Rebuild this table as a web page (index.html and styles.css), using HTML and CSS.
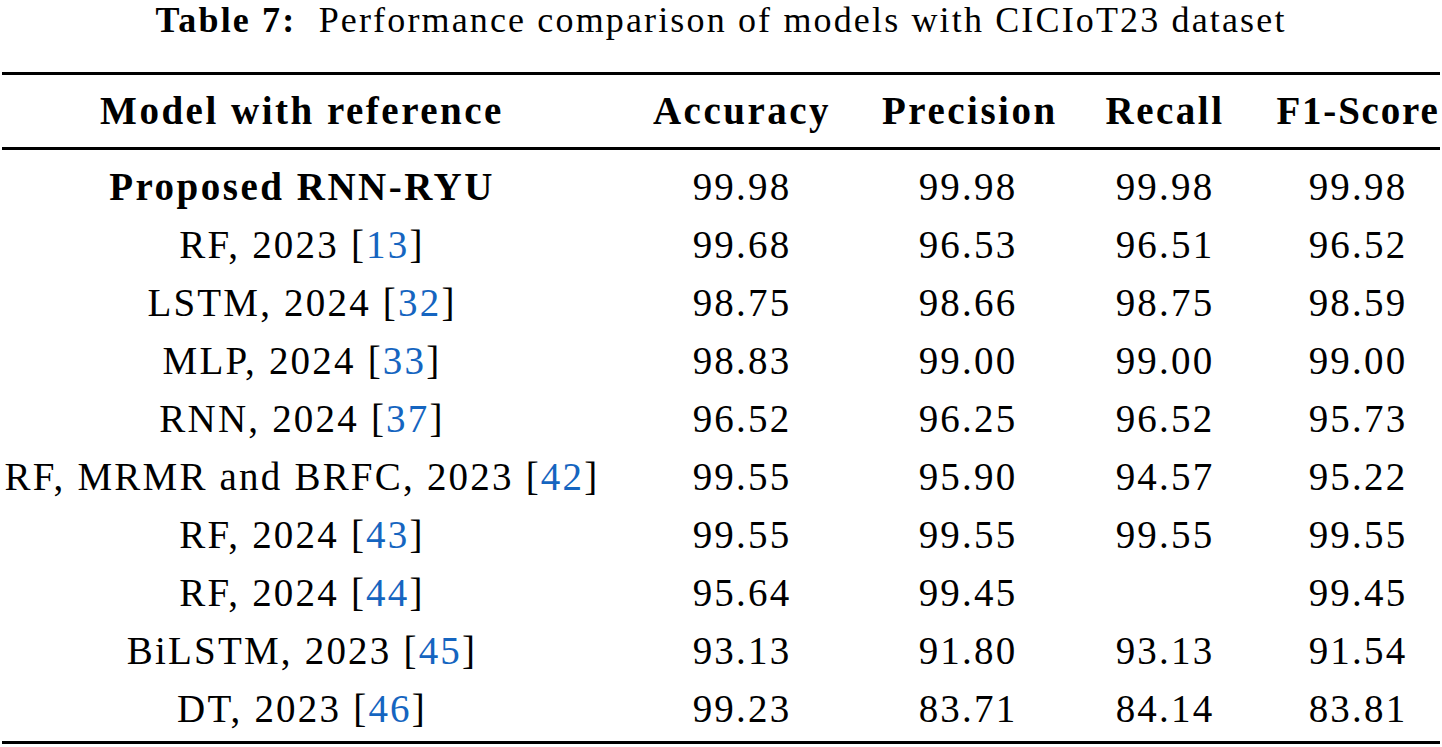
FILE: index.html
```html
<!DOCTYPE html>
<html>
<head>
<meta charset="utf-8">
<link rel="stylesheet" href="styles.css">
</head>
<body>
<div class="page">
  <div class="caption"><b>Table 7:</b>&nbsp; Performance comparison of models with CICIoT23 dataset</div>
  <table class="results">
    <colgroup>
      <col class="c1"><col class="c2"><col class="c3"><col class="c4"><col class="c5">
    </colgroup>
    <thead>
      <tr>
        <th>Model with reference</th>
        <th>Accuracy</th>
        <th>Precision</th>
        <th>Recall</th>
        <th class="tight">F1-Score</th>
      </tr>
    </thead>
    <tbody>
      <tr class="first"><td class="bold">Proposed RNN-RYU</td><td>99.98</td><td>99.98</td><td>99.98</td><td>99.98</td></tr>
      <tr><td>RF, 2023 [<span class="ref">13</span>]</td><td>99.68</td><td>96.53</td><td>96.51</td><td>96.52</td></tr>
      <tr><td>LSTM, 2024 [<span class="ref">32</span>]</td><td>98.75</td><td>98.66</td><td>98.75</td><td>98.59</td></tr>
      <tr><td>MLP, 2024 [<span class="ref">33</span>]</td><td>98.83</td><td>99.00</td><td>99.00</td><td>99.00</td></tr>
      <tr><td>RNN, 2024 [<span class="ref">37</span>]</td><td>96.52</td><td>96.25</td><td>96.52</td><td>95.73</td></tr>
      <tr><td>RF, MRMR and BRFC, 2023 [<span class="ref">42</span>]</td><td>99.55</td><td>95.90</td><td>94.57</td><td>95.22</td></tr>
      <tr><td>RF, 2024 [<span class="ref">43</span>]</td><td>99.55</td><td>99.55</td><td>99.55</td><td>99.55</td></tr>
      <tr><td>RF, 2024 [<span class="ref">44</span>]</td><td>95.64</td><td>99.45</td><td></td><td>99.45</td></tr>
      <tr><td>BiLSTM, 2023 [<span class="ref">45</span>]</td><td>93.13</td><td>91.80</td><td>93.13</td><td>91.54</td></tr>
      <tr class="last"><td>DT, 2023 [<span class="ref">46</span>]</td><td>99.23</td><td>83.71</td><td>84.14</td><td>83.81</td></tr>
    </tbody>
  </table>
</div>
</body>
</html>
```

FILE: styles.css
```css
html, body {
  margin: 0;
  padding: 0;
  background: #ffffff;
}
body {
  font-family: "Liberation Serif", "Times New Roman", serif;
  color: #000000;
}
.page {
  width: 1442px;
  padding: 0 2px;
  box-sizing: border-box;
}
.caption {
  text-align: center;
  font-size: 36px;
  line-height: 40px;
  letter-spacing: 2.15px;
  height: 72px;
  box-sizing: border-box;
}
.caption b {
  font-weight: bold;
}
.results {
  width: 1438px;
  border-collapse: collapse;
  table-layout: fixed;
  font-size: 39px;
  letter-spacing: 2.2px;
  border-top: 3px solid #000;
  border-bottom: 3px solid #000;
}
.c1 { width: 600px; }
.c2 { width: 280px; }
.c3 { width: 172px; }
.c4 { width: 222px; }
.c5 { width: 164px; }
.results th,
.results td {
  padding: 0;
  text-align: center;
  vertical-align: middle;
  white-space: nowrap;
  line-height: 44px;
}
.results th {
  font-weight: bold;
  letter-spacing: 2.5px;
  height: 72px;
  border-bottom: 3px solid #000;
}
.results th.tight {
  letter-spacing: 1.8px;
}
.results td {
  height: 58px;
}
.results tr.first td {
  padding-top: 8px;
}
.results tr.last td {
  padding-bottom: 3px;
}
.results .bold {
  font-weight: bold;
  letter-spacing: 2.5px;
}
.ref {
  color: #1565c0;
}
```
